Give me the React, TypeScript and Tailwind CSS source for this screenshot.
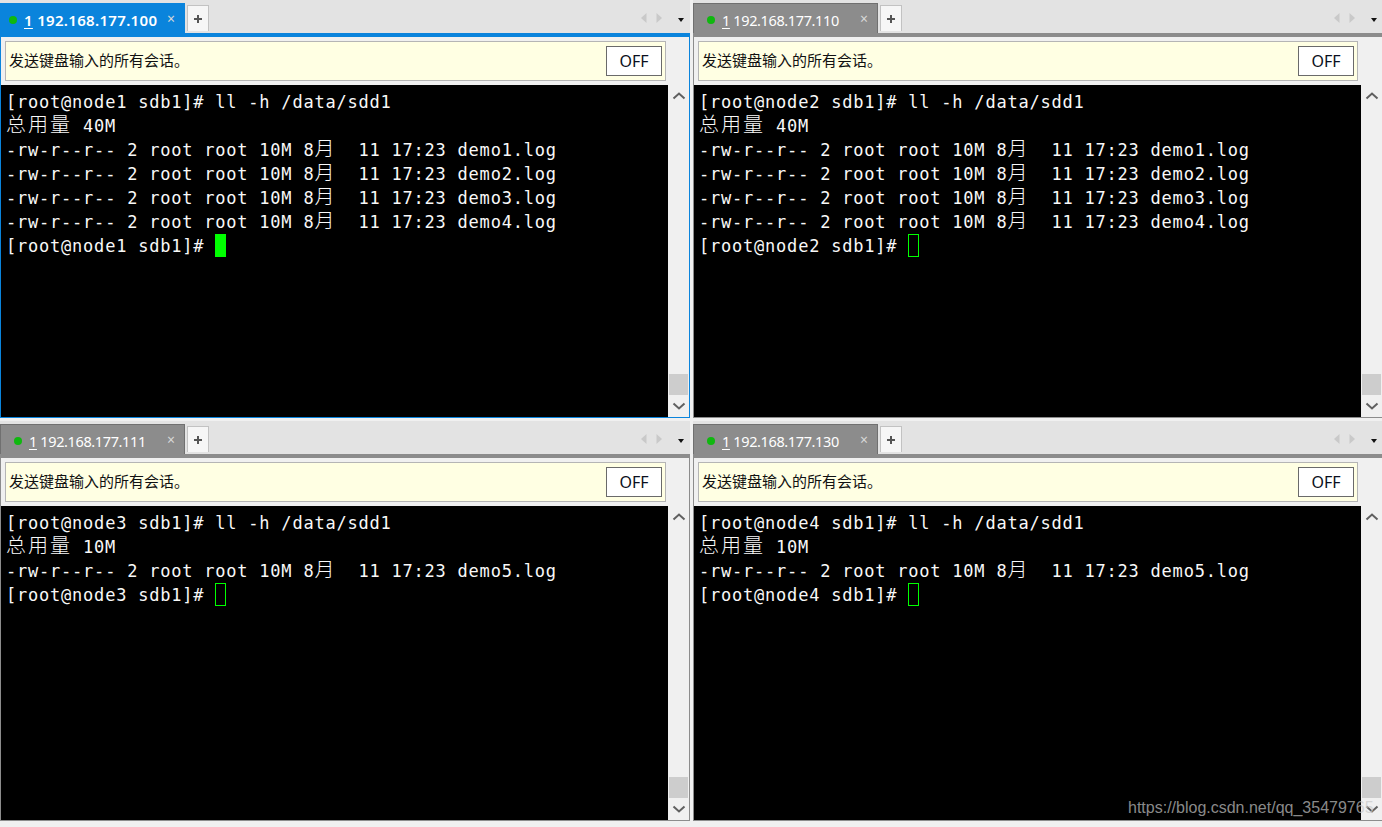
import React from "react";

const ui = "font-['Noto_Sans','Noto_Sans_CJK_SC',sans-serif]";

function TermLine({ text }: { text: string }) {
  const parts = text.split(/([\u4e00-\u9fff]+)/);
  return (
    <div className="h-[24px] leading-[24px] whitespace-pre">
      {parts.map((p, i) =>
        /[\u4e00-\u9fff]/.test(p) ? (
          <span key={i} className="font-['Noto_Sans_CJK_SC',sans-serif] text-[20px] leading-[1px] tracking-[2px] font-light">
            {p}
          </span>
        ) : (
          <span key={i}>{p}</span>
        )
      )}
    </div>
  );
}

function Chevron({ up }: { up?: boolean }) {
  return (
    <svg width="14" height="9" viewBox="0 0 14 9" className="shrink-0">
      <polyline
        points={up ? "1.5,7.5 7,2.5 12.5,7.5" : "1.5,1.5 7,6.5 12.5,1.5"}
        fill="none"
        stroke="#606060"
        strokeWidth="2"
      />
    </svg>
  );
}

type PaneProps = {
  title: string;
  active?: boolean;
  node: number;
  total: string;
  logs: string[];
  height: string;
  filled?: boolean;
  right?: boolean;
};

function Pane({ title, active, node, total, logs, height, filled, right }: PaneProps) {
  const prompt = `[root@node${node} sdb1]# `;
  return (
    <div className={`flex flex-col w-[690px] shrink-0 ${height} ${ui}`}>
      <div className="flex h-[33px] shrink-0 bg-[#e3e3e3] pt-[3px]">
        <div
          className={`flex h-[34px] w-[185px] shrink-0 items-start ${
            active
              ? "bg-[#0a84dc] pl-[9px] pt-[9px]"
              : "bg-[#8c8c8c] pl-[13px] pt-[8px] border-t border-l border-r border-[#707070]"
          }`}
        >
          <span className="mt-[4px] h-[8px] w-[8px] shrink-0 rounded-full bg-[#0fb80f]" />
          <span
            className={`ml-[7px] flex-1 whitespace-nowrap text-white leading-[16px] ${
              active ? "text-[15px] font-semibold tracking-[0.32px]" : "text-[14.5px] tracking-[-0.38px]"
            }`}
          >
            <span className="underline underline-offset-2">1</span> {title}
          </span>
          <span className={`text-[14px] leading-[14px] text-[#d8d8d8] ${active ? "mr-[10px]" : "mr-[9px]"}`}>×</span>
        </div>
        <div className="ml-[2px] mt-[2px] flex h-[26px] w-[22px] items-center justify-center border border-b-0 border-[#c2c2c2] bg-[#f6f6f6]">
          <svg width="10" height="10" viewBox="0 0 10 10">
            <path d="M5 1v8M1 5h8" stroke="#555" strokeWidth="2" />
          </svg>
        </div>
        <div className="ml-auto flex h-[30px] items-center pr-[6px]">
          <svg width="6" height="10" viewBox="0 0 6 10">
            <path d="M5.5 0v10L0 5z" fill="#c9c9c9" />
          </svg>
          <svg width="6" height="10" viewBox="0 0 6 10" className="ml-[9px]">
            <path d="M.5 0v10L6 5z" fill="#c9c9c9" />
          </svg>
          <svg width="6" height="4" viewBox="0 0 6 4" className="ml-[16px] mt-[4px]">
            <path d="M0 0h6L3 4z" fill="#111" />
          </svg>
        </div>
      </div>
      <div
        className={`flex min-h-0 flex-1 flex-col border-x border-b border-t-[4px] bg-[#f0f0f0] ${
          active ? "border-[#0a84dc]" : "border-[#8c8c8c]"
        }`}
      >
        <div
          className={`mx-[4px] mt-[4px] flex h-[40px] shrink-0 items-center justify-between border border-[#b5b5b5] bg-[#ffffe3] pl-[3px] pr-[3px] ${
            right ? "w-[660px]" : "w-[661px]"
          }`}
        >
          <span className="pb-[1px] font-['Noto_Sans_CJK_SC',sans-serif] text-[15px] text-[#111]">发送键盘输入的所有会话。</span>
          <button className="flex h-[30px] w-[56px] items-center justify-center border border-[#6a6a6a] bg-white text-[16px] text-[#0b1020]">
            OFF
          </button>
        </div>
        <div className="mt-[4px] flex min-h-0 flex-1">
          <div className="w-[667px] shrink-0 bg-black pl-[5px] pt-[5px] font-['DejaVu_Sans_Mono',monospace] text-[17px] tracking-[0.78px] text-[#f8f8f8]">
            <TermLine text={`${prompt}ll -h /data/sdd1`} />
            <TermLine text={`总用量 ${total}`} />
            {logs.map((l) => (
              <TermLine key={l} text={`-rw-r--r-- 2 root root 10M 8月  11 17:23 ${l}`} />
            ))}
            <div className="flex h-[24px] leading-[24px] whitespace-pre">
              <span>{prompt}</span>
              <span className={`h-[23px] w-[11px] border border-[#00ff00] ${filled ? "bg-[#00ff00]" : ""}`} />
            </div>
          </div>
          <div className="flex flex-1 flex-col items-center bg-[#f0f0f0]">
            <div className="mt-[6px] h-[9px]">
              <Chevron up />
            </div>
            <div className="mt-auto h-[21px] w-[19px] bg-[#cdcdcd]" />
            <div className="mb-[6px] mt-[7px] h-[9px]">
              <Chevron />
            </div>
          </div>
        </div>
      </div>
    </div>
  );
}

export default function App() {
  const four = ["demo1.log", "demo2.log", "demo3.log", "demo4.log"];
  const one = ["demo5.log"];
  return (
    <div className="relative flex h-[827px] w-[1382px] flex-col gap-[3px] overflow-hidden bg-[#f0f0f0]">
      <div className="flex gap-[3px]">
        <Pane title="192.168.177.100" active node={1} total="40M" logs={four} height="h-[418px]" filled />
        <Pane title="192.168.177.110" node={2} total="40M" logs={four} height="h-[418px]" right />
      </div>
      <div className="flex gap-[3px]">
        <Pane title="192.168.177.111" node={3} total="10M" logs={one} height="h-[400px]" />
        <Pane title="192.168.177.130" node={4} total="10M" logs={one} height="h-[400px]" right />
      </div>
      <div className="absolute left-[1128px] top-[798px] whitespace-nowrap font-['Liberation_Sans',sans-serif] text-[16px] leading-[20px] text-[rgba(200,200,200,0.7)]">
        https://blog.csdn.net/qq_35479765
      </div>
    </div>
  );
}
